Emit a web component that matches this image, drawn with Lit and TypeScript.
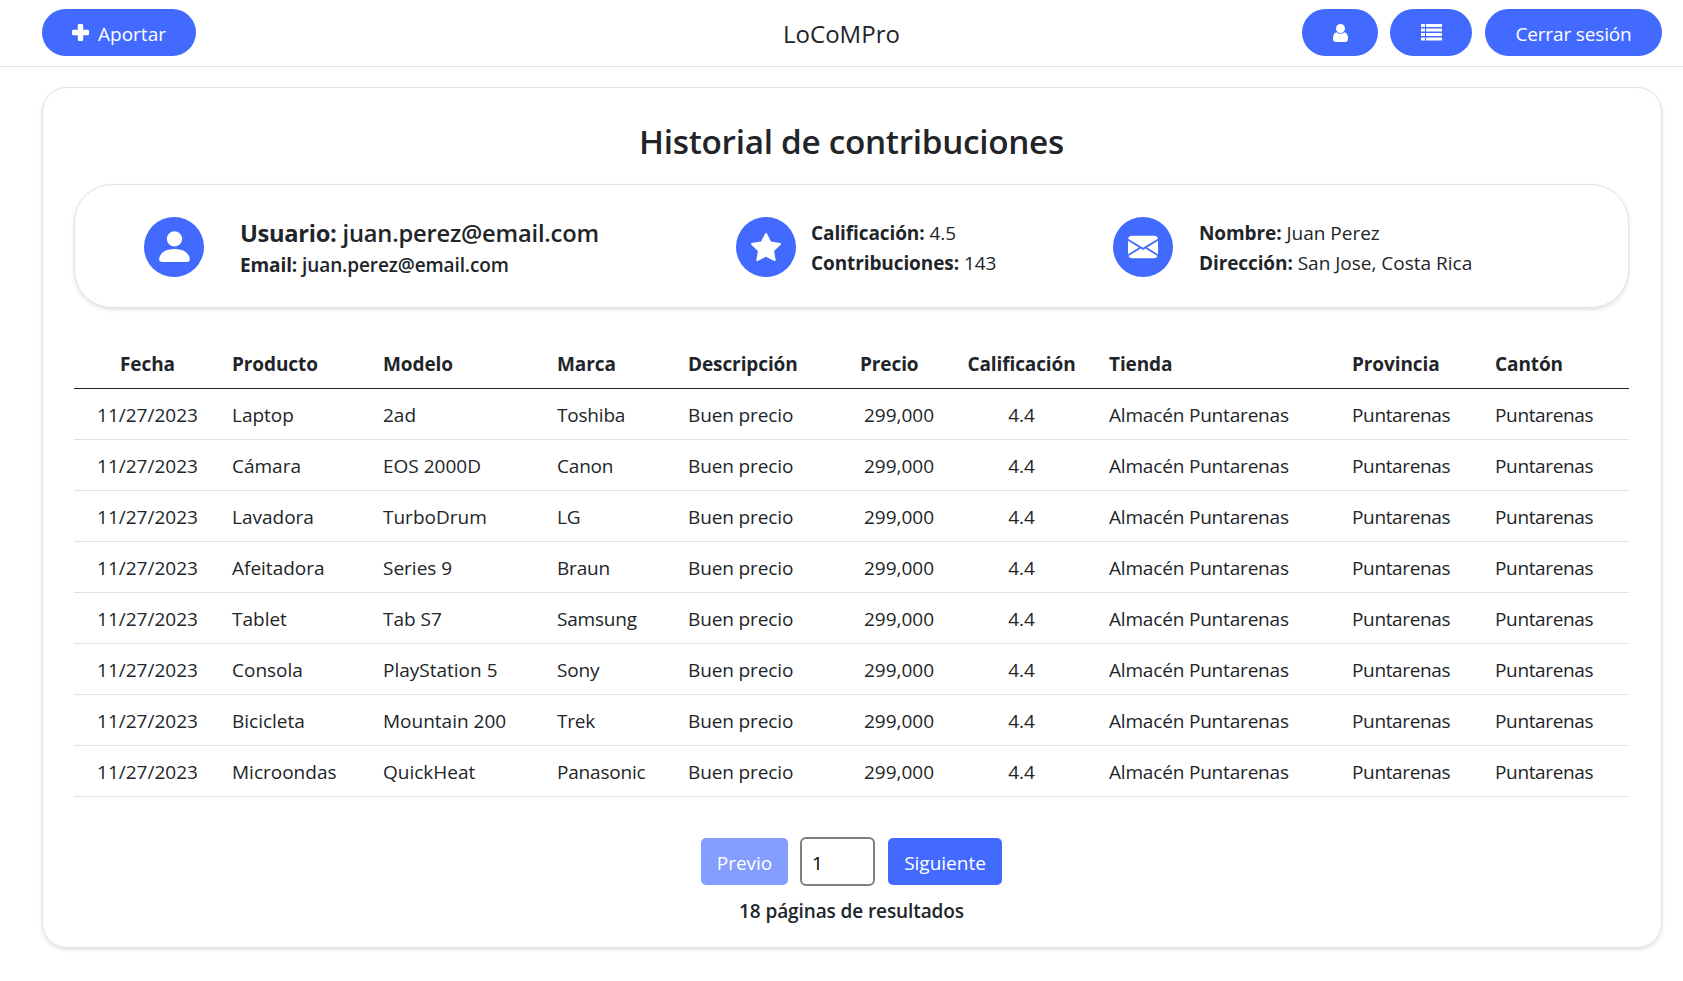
import { LitElement, html, css, svg } from "lit";
import { customElement, state } from "lit/decorators.js";

interface Contribution {
  date: string;
  product: string;
  model: string;
  brand: string;
}

const CONTRIBUTIONS: Contribution[] = [
  ["Laptop", "2ad", "Toshiba"],
  ["Cámara", "EOS 2000D", "Canon"],
  ["Lavadora", "TurboDrum", "LG"],
  ["Afeitadora", "Series 9", "Braun"],
  ["Tablet", "Tab S7", "Samsung"],
  ["Consola", "PlayStation 5", "Sony"],
  ["Bicicleta", "Mountain 200", "Trek"],
  ["Microondas", "QuickHeat", "Panasonic"],
].map(([product, model, brand]) => ({ date: "11/27/2023", product, model, brand }));

const personIcon = svg`<path d="M3 14s-1 0-1-1 1-4 6-4 6 3 6 4-1 1-1 1zm5-6a3 3 0 1 0 0-6 3 3 0 0 0 0 6"/>`;
const starIcon = svg`<path d="M3.612 15.443c-.386.198-.824-.149-.746-.592l.83-4.73L.173 6.765c-.329-.314-.158-.888.283-.95l4.898-.696L7.538.792c.197-.39.73-.39.927 0l2.184 4.327 4.898.696c.441.062.612.636.282.95l-3.522 3.356.83 4.73c.078.443-.36.79-.746.592L8 13.187l-4.389 2.256z"/>`;
const mailIcon = svg`<path d="M.05 3.555A2 2 0 0 1 2 2h12a2 2 0 0 1 1.95 1.555L8 8.414zM0 4.697v7.104l5.803-3.558zM6.761 8.83l-6.57 4.027A2 2 0 0 0 2 14h12a2 2 0 0 0 1.808-1.144l-6.57-4.027L8 9.586zm3.436-.586L16 11.801V4.697z"/>`;

@customElement("app-root")
export class AppRoot extends LitElement {
  @state() private page = 1;

  static styles = css`
    :host {
      display: block;
      min-height: 981px;
      background: #fff;
      color: #212529;
      font: 400 19px/30px "Open Sans", "Noto Sans", sans-serif;
    }
    * { box-sizing: border-box; }
    svg { display: block; fill: currentColor; }
    button { font: inherit; color: #fff; background: #426aff; border: 0; padding: 0; }
    .bar {
      display: grid;
      grid-template-columns: 1fr auto 1fr;
      align-items: start;
      height: 67px;
      padding: 9px 0 0 0;
      border-bottom: 1px solid #dee2e6;
    }
    .pill {
      height: 47px;
      border-radius: 25px;
      display: flex;
      align-items: center;
      justify-content: center;
    }
    .add { width: 154px; gap: 9px; margin-left: 42px; }
    .user { width: 76px; }
    .list { width: 82px; margin: 0 13px 0 12px; }
    .logout { width: 177px; letter-spacing: -0.15px; }
    .label { padding-top: 3px; }
    .brand { font-size: 24px; line-height: 50px; }
    .actions { display: flex; justify-content: flex-end; padding-right: 21px; }
    .card {
      margin: 20px 21px 0 42px;
      height: 861px;
      padding: 0 32px 0 31px;
      border: 1px solid #dee2e6;
      border-radius: 25px;
      box-shadow: 0 2px 4px rgba(0, 0, 0, 0.12);
    }
    .title {
      margin: 0;
      padding-top: 31px;
      height: 96px;
      text-align: center;
      font-size: 33.3px;
      line-height: 44px;
      font-weight: 600;
      letter-spacing: -0.3px;
    }
    .profile {
      display: grid;
      grid-template-columns: 592px 377px 1fr;
      height: 124px;
      padding: 1px 0 0 69px;
      border: 1px solid #dee2e6;
      border-radius: 38px;
      box-shadow: 0 2px 4px rgba(0, 0, 0, 0.12);
    }
    .item { display: flex; align-items: center; }
    .disc {
      width: 60px;
      height: 60px;
      border-radius: 50%;
      background: #426aff;
      color: #fff;
      display: grid;
      place-items: center;
    }
    .info { padding: 2px 0 0 15px; }
    .info.wide { padding-left: 36px; }
    .info.mid { padding-left: 26px; }
    .account { font-size: 23.7px; font-weight: 600; line-height: 34px; letter-spacing: -0.2px; }
    .email { font-weight: 600; letter-spacing: -0.1px; }
    b { font-weight: 700; letter-spacing: -0.1px; }
    .account b { letter-spacing: -0.3px; }
    .table {
      width: 100%;
      margin-top: 29px;
      border-collapse: collapse;
      table-layout: fixed;
    }
    th, td {
      height: 51px;
      padding: 2px 0 0 0;
      text-align: left;
      white-space: nowrap;
      border-bottom: 1px solid #dee2e6;
    }
    th { font-weight: 700; border-bottom-color: #212529; padding-top: 4px; letter-spacing: -0.1px; }
    .brand-name { letter-spacing: -0.2px; }
    .note { letter-spacing: -0.12px; }
    .store { letter-spacing: -0.18px; }
    .place { letter-spacing: -0.35px; }
    .c-date { width: 147px; }
    .c-gap { width: 11px; }
    .c-product { width: 151px; }
    .c-model { width: 174px; }
    .c-brand { width: 131px; }
    .c-desc { width: 172px; }
    .c-price { width: 107px; }
    .c-rate { width: 142px; }
    .c-store { width: 243px; }
    .c-prov { width: 143px; }
    td.price { padding-left: 4px; }
    .rate { padding-right: 33px; text-align: center; }
    .date { text-align: center; }
    .pager {
      display: flex;
      justify-content: center;
      align-items: center;
      margin-top: 40px;
    }
    .step { height: 47px; border-radius: 5px; padding-top: 3px; }
    .prev { width: 87px; }
    .prev:disabled { background: #849eff; }
    .next { width: 114px; }
    .page {
      width: 75px;
      height: 49px;
      margin: 0 13px 0 12px;
      padding: 4px 0 0 10px;
      border: 2px solid #808080;
      border-radius: 6px;
      font: inherit;
      color: #000;
      outline: none;
    }
    .total { margin: 10px 0 0; text-align: center; font-weight: 600; letter-spacing: -0.1px; }
  `;

  private disc(icon: unknown, size: number) {
    return html`<div class="disc"><svg width=${size} height=${size} viewBox="0 0 16 16">${icon}</svg></div>`;
  }

  render() {
    return html`
      <header class="bar">
        <button class="pill add">
          <svg width="17" height="17" viewBox="0 0 17 17"><path d="M7 0h3a1.200 1.200 0 0 1 1.200 1.200v4.600h4.600A1.200 1.200 0 0 1 17 7v3a1.200 1.200 0 0 1-1.200 1.200h-4.600v4.600A1.200 1.200 0 0 1 10 17H7a1.200 1.200 0 0 1-1.200-1.200v-4.600H1.200A1.200 1.200 0 0 1 0 10V7a1.200 1.200 0 0 1 1.200-1.200h4.600V1.200A1.200 1.200 0 0 1 7 0z"/></svg>
          <span class="label">Aportar</span>
        </button>
        <div class="brand">LoCoMPro</div>
        <nav class="actions">
          <button class="pill user" aria-label="Usuario">
            <svg width="15" height="18" viewBox="0 0 1280 1536"><path d="M1280 1271q0 109-62.500 187t-150.500 78H213q-88 0-150.500-78T0 1271q0-85 8.500-160.500t31.500-152 58.500-131 94-89T327 704q131 128 313 128t313-128q76 0 134.500 34.500t94 89 58.500 131 31.500 152 8.500 160.500zm-256-887q0 159-112.500 271.500T640 768 368.500 655.500 256 384t112.500-271.500T640 0t271.500 112.500T1024 384z"/></svg>
          </button>
          <button class="pill list" aria-label="Lista">
            <svg width="21" height="17" viewBox="0 0 21 17"><path d="M0 0h4v3H0zM5 0h16v3H5zM0 4.500h4v3H0zM5 4.500h16v3H5zM0 9h4v3H0zM5 9h16v3H5zM0 13.500h4v3H0zM5 13.500h16v3H5z"/></svg>
          </button>
          <button class="pill logout"><span class="label">Cerrar sesión</span></button>
        </nav>
      </header>
      <main class="card">
        <h1 class="title">Historial de contribuciones</h1>
        <section class="profile">
          <div class="item">
            ${this.disc(personIcon, 41)}
            <div class="info wide">
              <div class="account"><b>Usuario:</b> juan.perez@email.com</div>
              <div class="email"><b>Email:</b> juan.perez@email.com</div>
            </div>
          </div>
          <div class="item">
            ${this.disc(starIcon, 30)}
            <div class="info">
              <div><b>Calificación:</b> 4.5</div>
              <div><b>Contribuciones:</b> 143</div>
            </div>
          </div>
          <div class="item">
            ${this.disc(mailIcon, 30)}
            <div class="info mid">
              <div><b>Nombre:</b> Juan Perez</div>
              <div><b>Dirección:</b> San Jose, Costa Rica</div>
            </div>
          </div>
        </section>
        <table class="table">
          <colgroup>
            <col class="c-date" /><col class="c-gap" /><col class="c-product" /><col class="c-model" /><col class="c-brand" />
            <col class="c-desc" /><col class="c-price" /><col class="c-rate" /><col class="c-store" /><col class="c-prov" /><col />
          </colgroup>
          <thead>
            <tr>
              <th class="date">Fecha</th><th></th><th>Producto</th><th>Modelo</th><th>Marca</th><th>Descripción</th>
              <th>Precio</th><th class="rate">Calificación</th><th>Tienda</th><th>Provincia</th><th>Cantón</th>
            </tr>
          </thead>
          <tbody>
            ${CONTRIBUTIONS.map(
              (c) => html`<tr>
                <td class="date">${c.date}</td><td></td><td>${c.product}</td><td>${c.model}</td><td class="brand-name">${c.brand}</td><td class="note">Buen precio</td>
                <td class="price">299,000</td><td class="rate">4.4</td><td class="store">Almacén Puntarenas</td><td class="place">Puntarenas</td><td class="place">Puntarenas</td>
              </tr>`
            )}
          </tbody>
        </table>
        <div class="pager">
          <button class="step prev" ?disabled=${this.page === 1}>Previo</button>
          <input class="page" .value=${String(this.page)} aria-label="Página" />
          <button class="step next">Siguiente</button>
        </div>
        <p class="total">18 páginas de resultados</p>
      </main>
    `;
  }
}
